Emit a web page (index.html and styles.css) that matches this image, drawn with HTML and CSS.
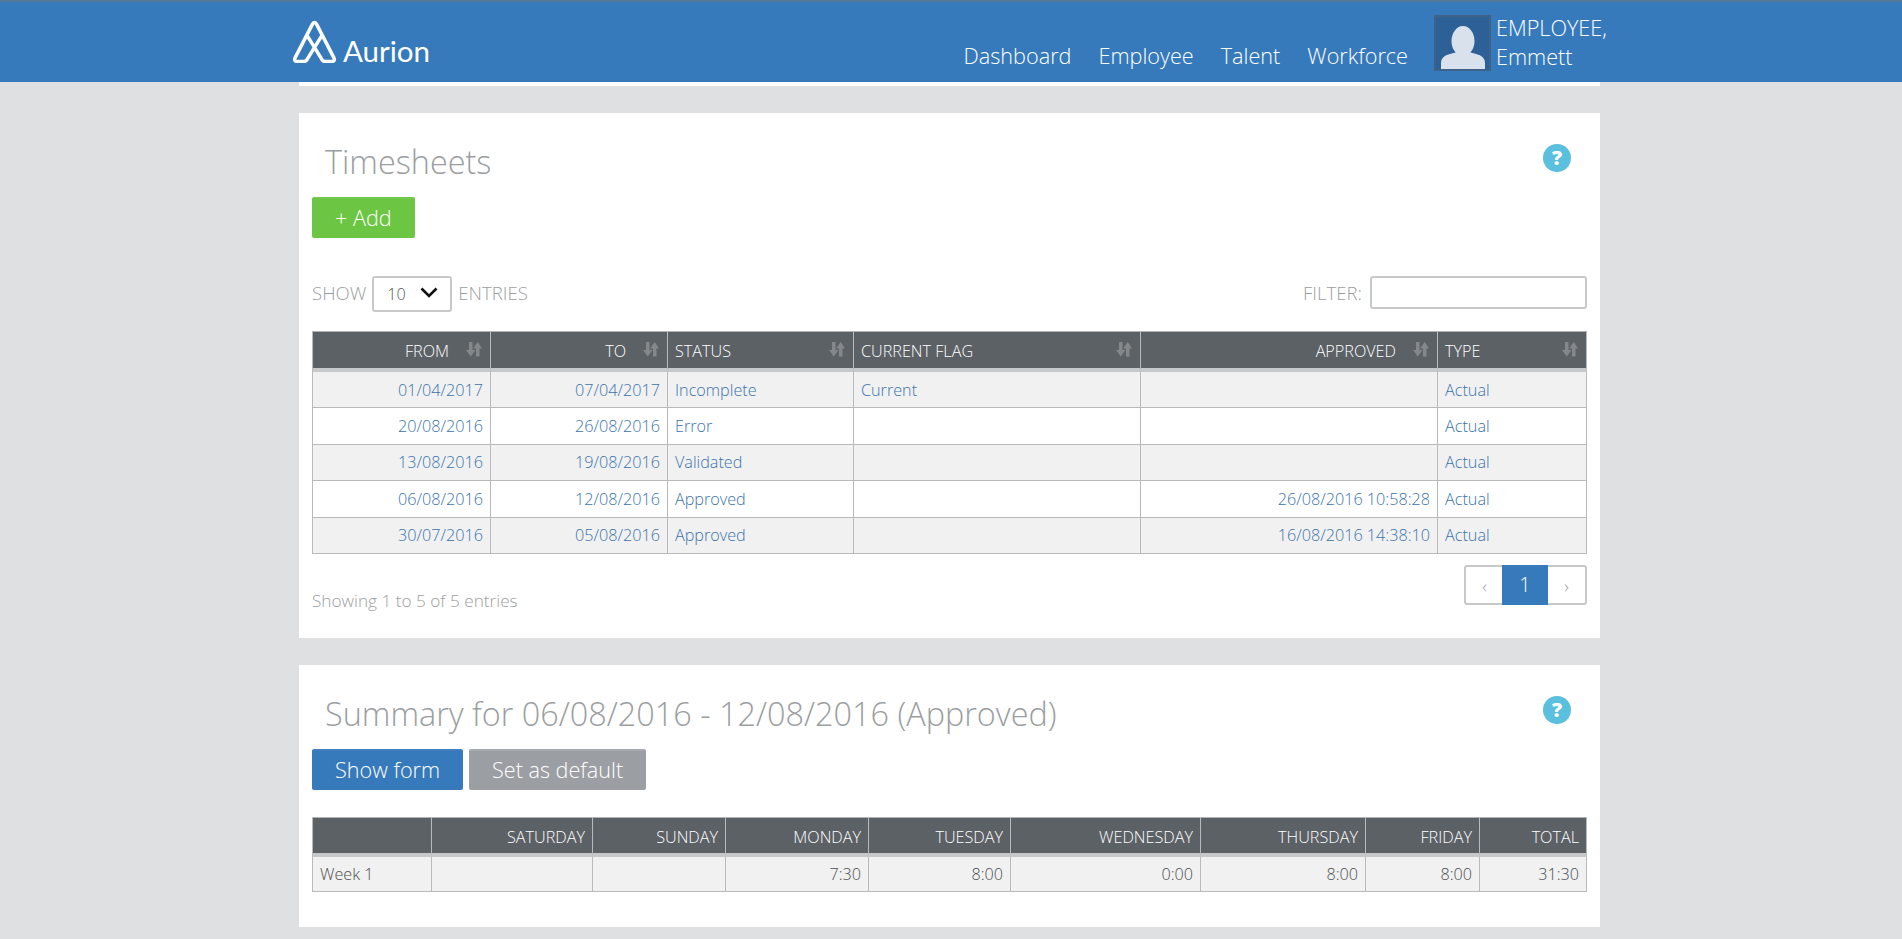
FILE: index.html
```html
<!DOCTYPE html>
<html lang="en">
<head>
<meta charset="utf-8">
<title>Timesheets</title>
<link rel="stylesheet" href="styles.css">
</head>
<body>
<header class="topbar">
  <div class="topbar-inner">
    <a class="brand" href="#">
      <svg class="brand-mark" viewBox="0 0 43 42" width="45" height="43" aria-hidden="true"><path d="M28.5 15.5 L14 39 Q13 40.5 11 40.5 L5 40.5 Q1 40.5 2.5 37 L19.5 4 Q21.5 1 23.5 4 L40.5 37 Q42 40.5 38 40.5 L32 40.5 Q30 40.5 29 39 L14.5 15.5" fill="none" stroke="#fff" stroke-width="3.4" stroke-linejoin="round" stroke-linecap="round"/></svg>
      <span class="brand-name">Aurion</span>
    </a>
    <nav class="nav">
      <a href="#">Dashboard</a>
      <a href="#">Employee</a>
      <a href="#">Talent</a>
      <a href="#">Workforce</a>
    </nav>
    <div class="user">
      <svg class="avatar" viewBox="0 0 57 56" width="57" height="56" aria-hidden="true"><rect width="57" height="56" fill="#2c6096"/><rect x="1" y="1" width="55" height="54" fill="none" stroke="#3f6288" stroke-width="2"/><ellipse cx="29" cy="26" rx="11.5" ry="15" fill="#d8e1ec"/><path d="M7 54 L7 48 Q7 41 16 39 L23 37 Q29 42 35 37 L42 39 Q51 41 51 48 L51 54 Z" fill="#d8e1ec"/></svg>
      <div class="user-name">EMPLOYEE,<br>Emmett</div>
    </div>
  </div>
</header>
<main class="page">
  <div class="strip"></div>

  <section class="card card-timesheets">
    <div class="card-head">
      <h1 class="card-title">Timesheets</h1>
      <span class="help">?</span>
    </div>
    <div class="actions">
      <a class="btn btn-green" href="#">+ Add</a>
    </div>
    <div class="controls">
      <div class="length">
        <span>SHOW</span>
        <span class="select"><span>10</span><svg viewBox="0 0 18 11" width="18" height="11" aria-hidden="true"><path d="M1.5 1.5 L9 9 L16.5 1.5" fill="none" stroke="#111" stroke-width="2.6"/></svg></span>
        <span>ENTRIES</span>
      </div>
      <label class="filter"><span>FILTER:</span><input class="filter-input" type="text"></label>
    </div>
    <table class="grid grid-main">
      <colgroup><col class="c-from"><col class="c-to"><col class="c-status"><col class="c-flag"><col class="c-approved"><col class="c-type"></colgroup>
      <thead>
        <tr>
          <th class="num">FROM<svg class="sort" viewBox="0 0 16 15" aria-hidden="true"><path d="M3 0h3.5v8h3L4.75 14.5 0 8h3zM10 14.5V6.5H7.2L11.7 0 16 6.5h-2.5v8z"/></svg></th>
          <th class="num">TO<svg class="sort" viewBox="0 0 16 15" aria-hidden="true"><path d="M3 0h3.5v8h3L4.75 14.5 0 8h3zM10 14.5V6.5H7.2L11.7 0 16 6.5h-2.5v8z"/></svg></th>
          <th>STATUS<svg class="sort" viewBox="0 0 16 15" aria-hidden="true"><path d="M3 0h3.5v8h3L4.75 14.5 0 8h3zM10 14.5V6.5H7.2L11.7 0 16 6.5h-2.5v8z"/></svg></th>
          <th>CURRENT FLAG<svg class="sort" viewBox="0 0 16 15" aria-hidden="true"><path d="M3 0h3.5v8h3L4.75 14.5 0 8h3zM10 14.5V6.5H7.2L11.7 0 16 6.5h-2.5v8z"/></svg></th>
          <th class="num">APPROVED<svg class="sort" viewBox="0 0 16 15" aria-hidden="true"><path d="M3 0h3.5v8h3L4.75 14.5 0 8h3zM10 14.5V6.5H7.2L11.7 0 16 6.5h-2.5v8z"/></svg></th>
          <th>TYPE<svg class="sort" viewBox="0 0 16 15" aria-hidden="true"><path d="M3 0h3.5v8h3L4.75 14.5 0 8h3zM10 14.5V6.5H7.2L11.7 0 16 6.5h-2.5v8z"/></svg></th>
        </tr>
      </thead>
      <tbody class="links">
        <tr><td class="num">01/04/2017</td><td class="num">07/04/2017</td><td>Incomplete</td><td>Current</td><td class="num"></td><td>Actual</td></tr>
        <tr><td class="num">20/08/2016</td><td class="num">26/08/2016</td><td>Error</td><td></td><td class="num"></td><td>Actual</td></tr>
        <tr><td class="num">13/08/2016</td><td class="num">19/08/2016</td><td>Validated</td><td></td><td class="num"></td><td>Actual</td></tr>
        <tr><td class="num">06/08/2016</td><td class="num">12/08/2016</td><td>Approved</td><td></td><td class="num">26/08/2016 10:58:28</td><td>Actual</td></tr>
        <tr><td class="num">30/07/2016</td><td class="num">05/08/2016</td><td>Approved</td><td></td><td class="num">16/08/2016 14:38:10</td><td>Actual</td></tr>
      </tbody>
    </table>
    <div class="table-foot">
      <div class="info">Showing 1 to 5 of 5 entries</div>
      <div class="pager">
        <a class="page-link" href="#">‹</a>
        <a class="page-link page-current" href="#">1</a>
        <a class="page-link" href="#">›</a>
      </div>
    </div>
  </section>

  <section class="card card-summary">
    <div class="card-head">
      <h2 class="card-title">Summary for 06/08/2016 - 12/08/2016 (Approved)</h2>
      <span class="help">?</span>
    </div>
    <div class="actions">
      <a class="btn btn-blue" href="#">Show form</a>
      <a class="btn btn-grey" href="#">Set as default</a>
    </div>
    <table class="grid grid-summary">
      <colgroup><col class="s-week"><col class="s-sat"><col class="s-sun"><col class="s-mon"><col class="s-tue"><col class="s-wed"><col class="s-thu"><col class="s-fri"><col class="s-tot"></colgroup>
      <thead>
        <tr><th></th><th class="num">SATURDAY</th><th class="num">SUNDAY</th><th class="num">MONDAY</th><th class="num">TUESDAY</th><th class="num">WEDNESDAY</th><th class="num">THURSDAY</th><th class="num">FRIDAY</th><th class="num">TOTAL</th></tr>
      </thead>
      <tbody>
        <tr><td>Week 1</td><td class="num"></td><td class="num"></td><td class="num">7:30</td><td class="num">8:00</td><td class="num">0:00</td><td class="num">8:00</td><td class="num">8:00</td><td class="num">31:30</td></tr>
      </tbody>
    </table>
  </section>
</main>
</body>
</html>
```
FILE: styles.css
```css
* { box-sizing: border-box; }
html, body { margin: 0; padding: 0; }
body {
  background: #dfe0e2;
  font-family: "Open Sans", "Liberation Sans", sans-serif;
  font-weight: 300;
  color: #55595c;
  font-size: 16px;
}
a { text-decoration: none; color: inherit; }

.topbar {
  height: 82px;
  background: #377abc;
  border-top: 2px solid #55789c;
}
.topbar-inner {
  width: 1317px;
  margin-left: 292px;
  height: 80px;
  display: flex;
  align-items: flex-end;
  color: #fff;
}
.brand {
  display: flex;
  align-items: flex-end;
  gap: 6px;
  padding-bottom: 19px;
}
.brand-mark { display: block; }
.brand-name {
  font-family: "Lato", sans-serif;
  font-weight: 400;
  font-size: 29.5px;
  line-height: 26px;
  margin-bottom: -1px;
}
.nav {
  margin-left: auto;
  display: flex;
  gap: 27px;
  font-size: 21.65px;
  line-height: 30px;
  padding-bottom: 11px;
}
.user {
  display: flex;
  align-items: flex-start;
  gap: 5px;
  margin-left: 26px;
  width: 175px;
  align-self: flex-start;
  padding-top: 13px;
}
.avatar { display: block; flex: none; }
.user-name {
  font-size: 21.65px;
  line-height: 29px;
  margin-top: -2px;
  white-space: nowrap;
}

.page { width: 1301px; margin-left: 299px; }
.strip { height: 4px; background: #fff; margin-bottom: 27px; }
.card {
  background: #fff;
  padding: 0 13px;
  overflow: hidden;
}
.card-timesheets { height: 525px; margin-bottom: 27px; }
.card-summary { height: 262px; }

.card-head {
  height: 84px;
  display: flex;
  justify-content: space-between;
  align-items: flex-start;
  padding: 28px 16px 0 13px;
}
.card-title {
  margin: 0;
  font-size: 32.4px;
  font-weight: 300;
  line-height: 40px;
  color: #9b9ea1;
}
.help {
  width: 28px;
  height: 28px;
  margin-top: 3px;
  border-radius: 50%;
  background: #5bc0de;
  color: #fff;
  font-weight: 800;
  font-size: 20px;
  line-height: 28px;
  text-align: center;
}

.actions { display: flex; gap: 6px; }
.btn {
  display: block;
  height: 41px;
  padding: 0 23px;
  border-radius: 2px;
  font-size: 21.6px;
  line-height: 37px;
  color: #fff;
  border-top: 2px solid transparent;
}
.btn-green { background: #6cc644; border-top-color: #71c94b; }
.btn-blue { background: #377abc; border-top-color: #4180c0; }
.btn-grey { background: #9b9fa3; border-top-color: #a6a9ad; }

.controls {
  margin-top: 38px;
  height: 36px;
  display: flex;
  justify-content: space-between;
  align-items: flex-start;
  font-size: 18.6px;
  line-height: 24px;
  color: #9b9ea1;
}
.length { display: flex; align-items: center; gap: 6px; height: 34px; }
.select {
  width: 80px;
  height: 36px;
  margin-bottom: -2px;
  border: 2px solid #c6c8ca;
  border-radius: 3px;
  display: flex;
  justify-content: space-between;
  align-items: center;
  padding: 0 12px 0 13px;
  font-size: 16.2px;
  color: #55595c;
}
.select svg { margin-top: -4px; }
.filter { display: flex; align-items: center; gap: 8px; height: 33px; }
.filter-input {
  width: 217px;
  height: 33px;
  border: 2px solid #c6c8ca;
  border-radius: 3px;
  background: #fff;
  outline: none;
}

.grid {
  width: 1275px;
  table-layout: fixed;
  border-collapse: separate;
  border-spacing: 0;
  margin-top: 19px;
  font-size: 16.2px;
  border-left: 1px solid #b8babc;
}
.c-from { width: 178px; }
.c-to { width: 177px; }
.c-status { width: 186px; }
.c-flag { width: 287px; }
.c-approved { width: 297px; }
.c-type { width: 149px; }
.s-week { width: 119px; }
.s-sat { width: 161px; }
.s-sun { width: 133px; }
.s-mon { width: 143px; }
.s-tue { width: 142px; }
.s-wed { width: 190px; }
.s-thu { width: 165px; }
.s-fri { width: 114px; }
.s-tot { width: 107px; }

.grid th {
  position: relative;
  height: 41px;
  padding: 2px 7px 0;
  background: #5c6166;
  background-clip: padding-box;
  color: #fff;
  font-weight: 300;
  text-align: left;
  border-top: 1px solid #b1b3b5;
  border-bottom: 4px solid #c6c8ca;
  border-right: 1px solid #b8babc;
  white-space: nowrap;
}
.grid td {
  height: 36.4px;
  padding: 0 7px;
  border-bottom: 1px solid #b8babc;
  border-right: 1px solid #b8babc;
}
.grid tbody tr:nth-child(odd) td { background: #f1f1f1; }
.grid .num { text-align: right; }
.grid-main th.num { padding-right: 41px; }
.links td { color: #3a74ad; }
.sort {
  position: absolute;
  right: 8px;
  top: 10px;
  width: 16px;
  height: 15px;
  fill: #84888b;
}
.grid-summary { margin-top: 27px; }
.grid-summary th { height: 40px; padding-right: 7px; }
.grid-summary td { height: 35px; color: #4a4d50; }

.table-foot {
  display: flex;
  justify-content: space-between;
  align-items: flex-start;
  margin-top: 11px;
}
.info { color: #9b9ea1; margin-top: 25px; font-size: 17.2px; line-height: 22px; }
.pager {
  display: flex;
  height: 40px;
  width: 123px;
  border: 2px solid #c6c8ca;
  border-radius: 3px;
}
.page-link {
  flex: 1;
  text-align: center;
  color: #9b9ea1;
  line-height: 38px;
  font-size: 18px;
}
.page-current {
  flex: none;
  width: 46px;
  margin: -2px 0 -2px -1px;
  height: 40px;
  background: #377abc;
  color: #fff;
  line-height: 40px;
  font-size: 20px;
}
```
